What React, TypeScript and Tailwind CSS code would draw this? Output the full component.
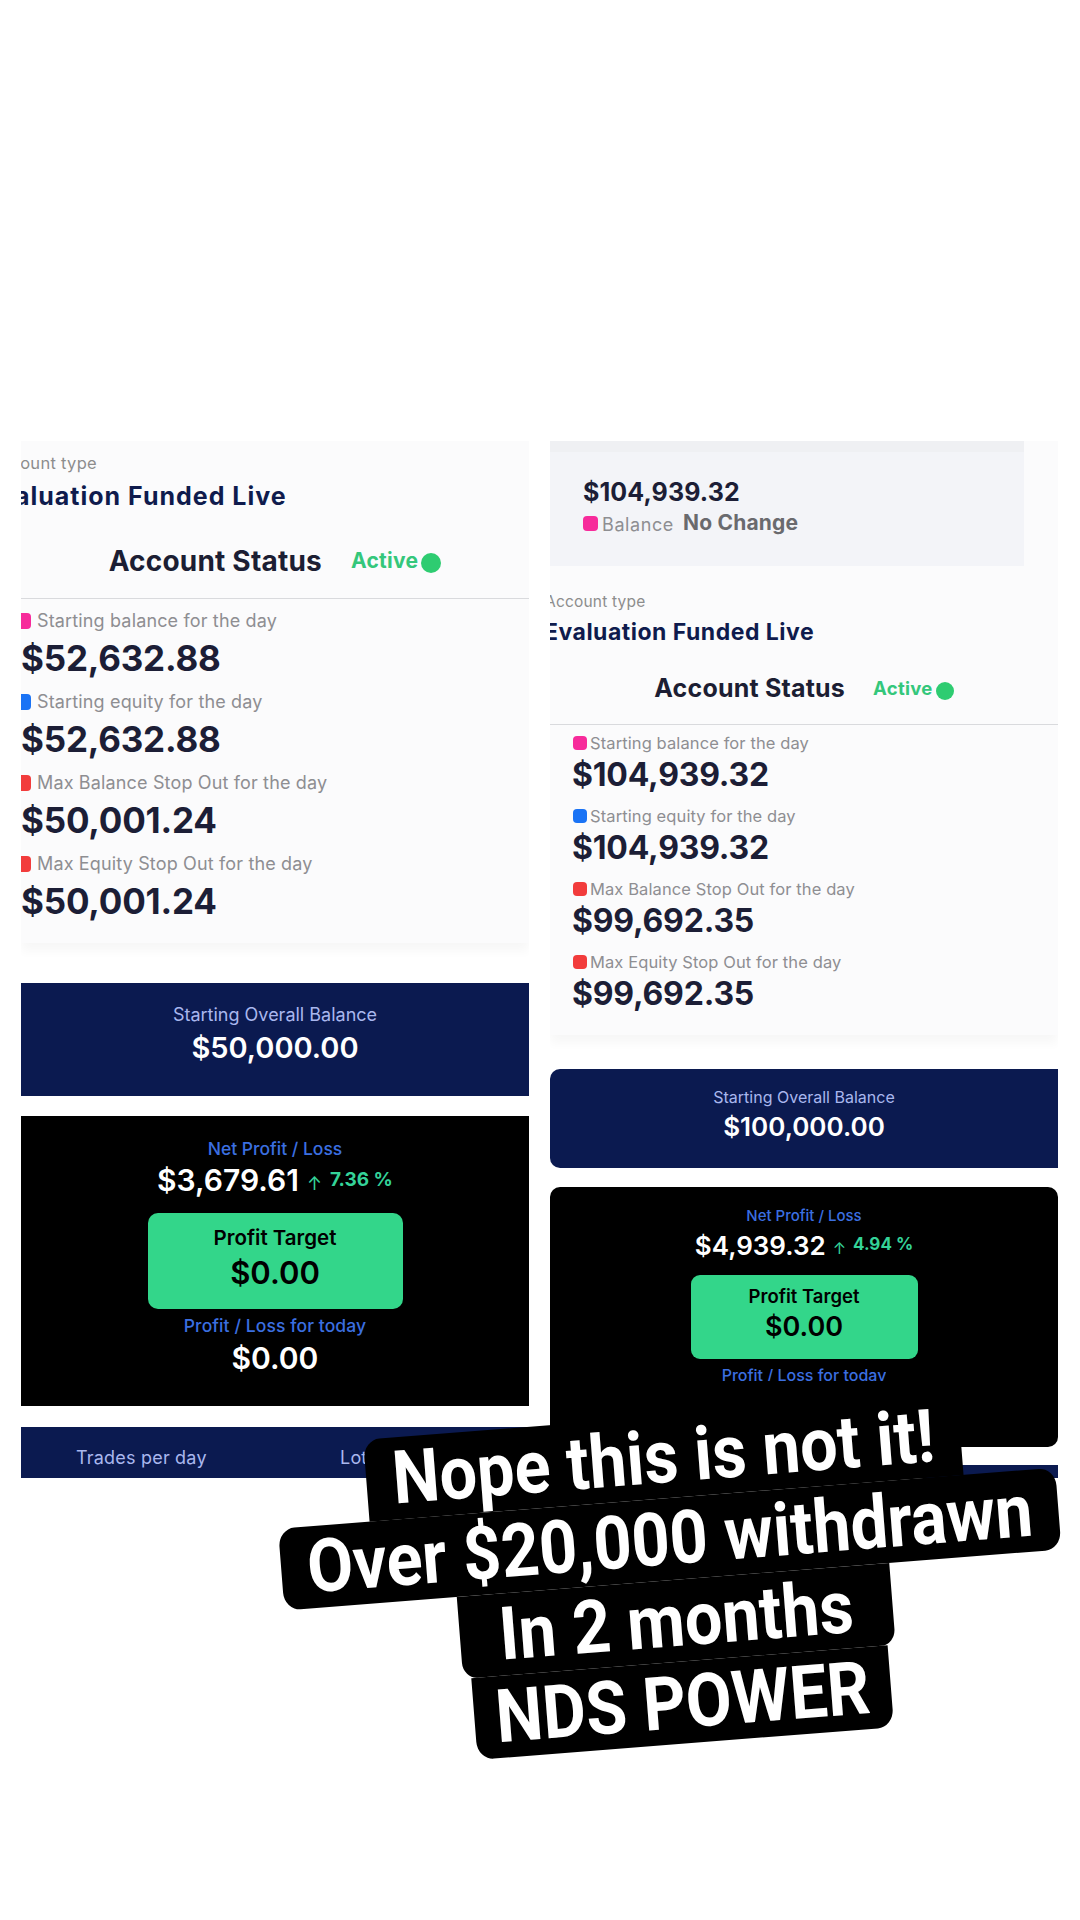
import React from "react";

const Marker = ({ color, cls }: { color: string; cls: string }) => (
  <span className={`inline-block shrink-0 ${color} ${cls}`} />
);

function LeftPanel() {
  const rows = [
    { c: "bg-[#f72b9b]", l: "Starting balance for the day", v: "$52,632.88" },
    { c: "bg-[#1a73f5]", l: "Starting equity for the day", v: "$52,632.88" },
    { c: "bg-[#f23c3c]", l: "Max Balance Stop Out for the day", v: "$50,001.24" },
    { c: "bg-[#f23c3c]", l: "Max Equity Stop Out for the day", v: "$50,001.24" },
  ];
  return (
    <div className="w-[508px] h-[1037px] overflow-hidden shrink-0">
      <div className="h-[502px] bg-[#fbfbfc] shadow-[0_8px_10px_rgba(0,0,0,0.035)] overflow-hidden">
        <div className="pt-[12px] h-[32px] leading-[20px] text-[16.5px] text-[#8d8d8d] -ml-[32px] whitespace-nowrap tracking-[0.3px]">
          Account type
        </div>
        <div className="mt-[9px] leading-[28px] text-[25px] font-bold text-[#0f1b4d] -ml-[38px] whitespace-nowrap tracking-[1px]">
          Evaluation Funded Live
        </div>
        <div className="mt-[31px] h-[40px] flex items-center justify-center gap-[29px]">
          <span className="text-[28px] font-bold text-[#1c1e33] tracking-[0.2px]">Account Status</span>
          <span className="flex items-center gap-[3px]">
            <span className="text-[21px] font-bold text-[#34c77b] tracking-[0.3px]">Active</span>
            <span className="w-[20px] h-[20px] rounded-full bg-[#2ecc71] mt-[4px]" />
          </span>
        </div>
        <div className="mt-[17px] h-px bg-[#d9dadd]" />
        <div className="mt-[11px]">
          {rows.map((r, i) => (
            <div key={i} className="mb-[11px]">
              <div className="h-[22px] flex items-center gap-[6px]">
                <Marker color={r.c} cls="w-[16px] h-[16px] rounded-[4px] -ml-[6px]" />
                <span className="text-[18px] leading-[22px] text-[#8e8e92] tracking-[0.15px]">{r.l}</span>
              </div>
              <div className="mt-[4px] h-[44px] leading-[44px] text-[35px] font-bold text-[#1c1e36] tracking-[-0.2px]">
                {r.v}
              </div>
            </div>
          ))}
        </div>
      </div>

      <div className="mt-[40px] h-[113px] bg-[#0b1a50] flex flex-col items-center pt-[21px]">
        <div className="leading-[22px] text-[18px] text-[#a9b7ee]">Starting Overall Balance</div>
        <div className="mt-[4px] leading-[36px] text-[29px] font-semibold text-white">$50,000.00</div>
      </div>

      <div className="mt-[20px] h-[290px] bg-black flex flex-col items-center pt-[22px]">
        <div className="leading-[22px] text-[17.5px] font-medium text-[#3b6fe0]">Net Profit / Loss</div>
        <div className="mt-[2px] h-[36px] flex items-center gap-[8px]">
          <span className="text-[30px] font-semibold text-white">$3,679.61</span>
          <span className="text-[18px] text-[#34d399] mt-[6px]">↑</span>
          <span className="text-[19px] font-bold text-[#34d399]">7.36 %</span>
        </div>
        <div className="mt-[15px] w-[255px] h-[96px] rounded-[10px] bg-[#33d68a] flex flex-col items-center pt-[13px]">
          <div className="leading-[24px] text-[20.5px] font-semibold text-black">Profit Target</div>
          <div className="mt-[3px] leading-[40px] text-[31px] font-semibold text-black">$0.00</div>
        </div>
        <div className="mt-[6px] leading-[22px] text-[17.5px] font-medium text-[#3b6fe0] tracking-[0.1px]">Profit / Loss for today</div>
        <div className="mt-[3px] leading-[36px] text-[30px] font-semibold text-white">$0.00</div>
      </div>

      <div className="mt-[21px] h-[60px] bg-[#0b1a50] grid grid-cols-2 pt-[20px]">
        <div className="pl-[55px] leading-[22px] text-[18px] text-[#a9b7ee] whitespace-nowrap tracking-[0.2px]">Trades per day</div>
        <div className="pl-[65px] leading-[22px] text-[18px] text-[#a9b7ee] whitespace-nowrap tracking-[0.2px]">Lots per trade</div>
      </div>
    </div>
  );
}

function RightPanel() {
  const rows = [
    { c: "bg-[#f72b9b]", l: "Starting balance for the day", v: "$104,939.32" },
    { c: "bg-[#1a73f5]", l: "Starting equity for the day", v: "$104,939.32" },
    { c: "bg-[#f23c3c]", l: "Max Balance Stop Out for the day", v: "$99,692.35" },
    { c: "bg-[#f23c3c]", l: "Max Equity Stop Out for the day", v: "$99,692.35" },
  ];
  return (
    <div className="w-[508px] h-[1037px] overflow-hidden shrink-0">
      <div className="h-[594px] bg-[#fbfbfc] shadow-[0_8px_10px_rgba(0,0,0,0.035)] overflow-hidden">
        <div className="w-[474px] h-[125px] bg-[#f3f4f8] border-t-[11px] border-[#eff0f3] pl-[33px] pt-[25px]">
          <div className="leading-[30px] text-[25px] font-bold text-[#1c1e36] tracking-[0.1px]">$104,939.32</div>
          <div className="mt-[5px] h-[22px] flex items-center">
            <span className="w-[15px] h-[15px] rounded-[4px] bg-[#f72b9b]" />
            <span className="ml-[4px] text-[18px] text-[#8e8e92] mt-[3px] tracking-[0.6px]">Balance</span>
            <span className="ml-[9px] text-[21px] font-bold text-[#6a6a6e] tracking-[0.2px]">No Change</span>
          </div>
        </div>
        <div className="mt-[27px] leading-[18px] text-[15.5px] text-[#8d8d8d] -ml-[5px] whitespace-nowrap tracking-[0.2px]">
          Account type
        </div>
        <div className="mt-[8px] leading-[26px] text-[23px] font-bold text-[#0f1b4d] -ml-[6px] whitespace-nowrap tracking-[0.5px]">
          Evaluation Funded Live
        </div>
        <div className="mt-[26px] h-[36px] flex items-center justify-center gap-[28px]">
          <span className="text-[25px] font-bold text-[#1c1e33] tracking-[0.2px]">Account Status</span>
          <span className="flex items-center gap-[3px]">
            <span className="text-[18.5px] font-bold text-[#34c77b] tracking-[0.3px]">Active</span>
            <span className="w-[18px] h-[18px] rounded-full bg-[#2ecc71] mt-[4px]" />
          </span>
        </div>
        <div className="mt-[17px] h-px bg-[#d9dadd]" />
        <div className="mt-[8px] pl-[22px]">
          {rows.map((r, i) => (
            <div key={i} className="mb-[11px]">
              <div className="h-[20px] flex items-center gap-[3px] pl-[1px]">
                <Marker color={r.c} cls="w-[14px] h-[14px] rounded-[4px]" />
                <span className="text-[16.5px] leading-[20px] text-[#8e8e92] tracking-[0.1px]">{r.l}</span>
              </div>
              <div className="mt-[2px] h-[40px] leading-[40px] text-[32px] font-bold text-[#1c1e36] tracking-[-0.2px]">
                {r.v}
              </div>
            </div>
          ))}
        </div>
      </div>

      <div className="mt-[34px] h-[99px] bg-[#0b1a50] rounded-l-[10px] flex flex-col items-center pt-[18px]">
        <div className="leading-[20px] text-[16px] text-[#a9b7ee]">Starting Overall Balance</div>
        <div className="mt-[4px] leading-[32px] text-[26px] font-semibold text-white">$100,000.00</div>
      </div>

      <div className="mt-[19px] h-[260px] bg-black rounded-[10px] flex flex-col items-center pt-[19px]">
        <div className="leading-[20px] text-[15px] font-medium text-[#3b6fe0]">Net Profit / Loss</div>
        <div className="mt-[3px] h-[32px] flex items-center gap-[7px]">
          <span className="text-[26px] font-semibold text-white">$4,939.32</span>
          <span className="text-[16px] text-[#34d399] mt-[5px]">↑</span>
          <span className="text-[17px] font-bold text-[#34d399]">4.94 %</span>
        </div>
        <div className="mt-[14px] w-[227px] h-[84px] rounded-[9px] bg-[#33d68a] flex flex-col items-center pt-[10px]">
          <div className="leading-[22px] text-[18.5px] font-semibold text-black">Profit Target</div>
          <div className="mt-[2px] leading-[36px] text-[27px] font-semibold text-black">$0.00</div>
        </div>
        <div className="mt-[6px] h-[16px] overflow-hidden leading-[20px] text-[16px] font-medium text-[#3b6fe0]">
          Profit / Loss for today
        </div>
      </div>

      <div className="mt-[18px] h-[40px] bg-[#0b1a50]" />
    </div>
  );
}

function Sticker() {
  const lines = [
    { t: "Nope this is not it!", c: "rounded-t-[18px] px-[29px]" },
    { t: "Over $20,000 withdrawn", c: "rounded-[18px] px-[29px]" },
    { t: "In 2 months", c: "rounded-b-[16px] px-[44px]" },
    { t: "NDS POWER", c: "rounded-b-[18px] px-[24px]" },
  ];
  return (
    <div className="absolute left-[273px] top-[1416px] w-[800px] h-[328px] rotate-[-4.5deg] scale-x-[0.9] flex flex-col items-center font-['Roboto',sans-serif]">
      {lines.map((l, i) => (
        <div
          key={i}
          className={`bg-black text-white ${l.c} h-[82px] leading-[82px] text-[74px] font-bold whitespace-nowrap`}
        >
          {l.t}
        </div>
      ))}
    </div>
  );
}

export default function App() {
  return (
    <div className="relative w-[1080px] h-[1920px] overflow-hidden bg-white font-['Inter',sans-serif]">
      <div className="pt-[441px] pl-[21px] flex gap-[21px]">
        <LeftPanel />
        <RightPanel />
      </div>
      <Sticker />
    </div>
  );
}
